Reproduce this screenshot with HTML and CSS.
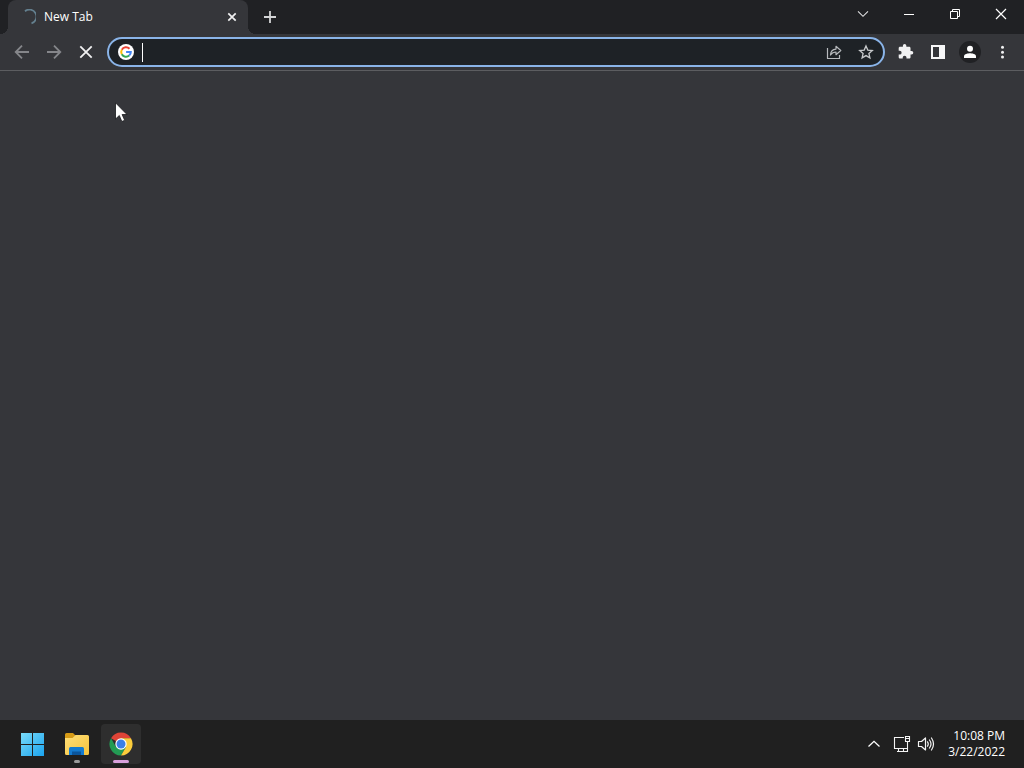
FILE: index.html
```html
<!DOCTYPE html>
<html lang="en">
<head>
<meta charset="utf-8">
<title>New Tab</title>
<link rel="stylesheet" href="styles.css">
</head>
<body>
<div class="desktop">
  <header class="tab-strip">
    <div class="tab">
      <svg class="spinner" width="16" height="16" viewBox="0 0 16 16"><path d="M5 2.200A7 7 0 1 1 11.500 14.300" fill="none" stroke="#64808f" stroke-width="1.800"/></svg>
      <span class="tab-title">New Tab</span>
      <button class="tab-close" aria-label="Close tab"><svg width="16" height="16" viewBox="0 0 16 16"><path d="M4.300 4.300l7.400 7.400M11.700 4.300l-7.400 7.400" stroke="#f1f1f2" stroke-width="1.700"/></svg></button>
    </div>
    <button class="new-tab" aria-label="New tab"><svg width="14" height="14" viewBox="0 0 14 14"><path d="M7 1v12M1 7h12" stroke="#d4d5d6" stroke-width="1.800"/></svg></button>
    <div class="window-controls">
      <button class="window-button" aria-label="Search tabs"><svg width="12" height="12" viewBox="0 0 12 12"><path d="M1 3.300l5 5 5-5" fill="none" stroke="#e0e0e1" stroke-width="1.100"/></svg></button>
      <button class="window-button" aria-label="Minimize"><svg width="12" height="12" viewBox="0 0 12 12"><path d="M1 6.500h10" stroke="#fff"/></svg></button>
      <button class="window-button" aria-label="Restore"><svg width="12" height="12" viewBox="0 0 12 12"><path d="M1.500 3.500h7v7h-7zM3.500 3.500v-2h7v7h-2" fill="none" stroke="#fff"/></svg></button>
      <button class="window-button" aria-label="Close"><svg width="12" height="12" viewBox="0 0 12 12"><path d="M1 1l10 10M11 1L1 11" stroke="#fff" stroke-width="1.200"/></svg></button>
    </div>
  </header>

  <nav class="toolbar">
    <button class="tool" aria-label="Back"><svg width="16" height="16" viewBox="0 0 16 16"><path d="M15 8H2M8 1.700L1.700 8 8 14.300" fill="none" stroke="#85868a" stroke-width="1.800"/></svg></button>
    <button class="tool" aria-label="Forward"><svg width="16" height="16" viewBox="0 0 16 16"><path d="M1 8h13M8 1.700L14.300 8 8 14.300" fill="none" stroke="#85868a" stroke-width="1.800"/></svg></button>
    <button class="tool" aria-label="Stop loading"><svg width="16" height="16" viewBox="0 0 16 16"><path d="M2.300 2.300l11.400 11.400M13.700 2.300L2.300 13.700" stroke="#f1f1f2" stroke-width="1.800"/></svg></button>
    <div class="address-bar">
      <svg class="search-logo" width="16" height="16" viewBox="0 0 16 16">
        <circle cx="8" cy="8" r="8" fill="#fff"/>
        <g fill="none" stroke-width="2">
          <path d="M11.500 4.700A4.800 4.800 0 0 0 3.800 5.700" stroke="#ea4335"/>
          <path d="M3.800 5.700a4.800 4.800 0 0 0 0 4.600" stroke="#fbbc05"/>
          <path d="M3.800 10.300a4.800 4.800 0 0 0 7.400 1.300" stroke="#34a853"/>
          <path d="M11.200 11.600A4.800 4.800 0 0 0 12.800 8H8.100" stroke="#4285f4"/>
        </g>
      </svg>
      <span class="caret"></span>
      <input class="address" type="text" aria-label="Address and search bar">
      <button class="tool" aria-label="Share this page"><svg width="16" height="16" viewBox="0 0 16 16"><path d="M1.500 4v10.500h12V11M4.500 11c.2-3.700 2.200-5.700 5.500-5.900V2.300L14.800 6.500 10 10.700V8C7.400 8 5.800 9 4.500 11z" fill="none" stroke="#b7babd" stroke-width="1.200" stroke-linejoin="round"/></svg></button>
      <button class="tool" aria-label="Bookmark this tab"><svg width="16" height="16" viewBox="0 0 16 16"><path d="M8 1.900l1.800 4.200 4.500.4-3.400 3 1 4.400L8 11.600l-3.900 2.300 1-4.400-3.400-3 4.500-.4z" fill="none" stroke="#c8cacc" stroke-width="1.300"/></svg></button>
    </div>
    <button class="tool" aria-label="Extensions"><svg width="16" height="16" viewBox="1 1 23 23"><path d="M20.500 11H19V7c0-1.100-.9-2-2-2h-4V3.500a2.500 2.500 0 0 0-5 0V5H4c-1.100 0-2 .9-2 2v3.800h1.500a2.700 2.700 0 0 1 0 5.400H2V20c0 1.100.9 2 2 2h3.800v-1.500a2.700 2.700 0 0 1 5.400 0V22H17c1.100 0 2-.9 2-2v-4h1.500a2.500 2.500 0 0 0 0-5z" fill="#f1f1f2"/></svg></button>
    <button class="tool" aria-label="Side panel"><svg width="16" height="16" viewBox="0 0 16 16"><path d="M1 1h14v14H1zM3 3v10h6V3z" fill="#f7f7f8" fill-rule="evenodd"/></svg></button>
    <button class="tool" aria-label="Profile"><svg width="22" height="22" viewBox="0 0 22 22"><circle cx="11" cy="11" r="11" fill="#202124"/><circle cx="11" cy="7.800" r="3" fill="#fff"/><path d="M5 17v-1.800C5 13 9 12.200 11 12.200s6 .8 6 3V17z" fill="#fff"/></svg></button>
    <button class="tool" aria-label="Menu"><svg width="16" height="16" viewBox="0 0 16 16"><g fill="#f1f1f2"><circle cx="8.500" cy="3.300" r="1.500"/><circle cx="8.500" cy="8.200" r="1.500"/><circle cx="8.500" cy="13.100" r="1.500"/></g></svg></button>
  </nav>

  <main class="page"></main>

  <footer class="taskbar">
    <div class="apps">
      <button class="app" aria-label="Start"><svg width="24" height="24" viewBox="0 0 24 24"><defs><linearGradient id="win" x1="0" y1="0" x2="24" y2="24" gradientUnits="userSpaceOnUse"><stop offset="0" stop-color="#7bdcf9"/><stop offset="1" stop-color="#18a2ee"/></linearGradient></defs><path d="M0 1h11v11H0zM12 1h11v11H12zM0 13h11v11H0zM12 13h11v11H12z" fill="url(#win)"/></svg></button>
      <button class="app app-open" aria-label="File Explorer"><svg width="26" height="24" viewBox="0 0 26 24"><defs><linearGradient id="folder" x1="0" y1="0" x2="1" y2="1"><stop offset="0" stop-color="#ffdf78"/><stop offset="1" stop-color="#f6c33c"/></linearGradient></defs><path d="M1 8V2.500Q1 1 2.500 1H9l2.500 2.500L9 7z" fill="#d79b16"/><path d="M1 6h7.500l3-3H23.500Q25 3 25 4.500V21.500Q25 23 23.500 23H2.500Q1 23 1 21.500z" fill="url(#folder)"/><path d="M5 23v-6.500Q5 15 6.500 15h12Q20 15 20 16.500V23z" fill="#147bcf"/><path d="M8 23v-3.500h9V23z" fill="#0b559b"/></svg></button>
      <button class="app app-active" aria-label="Google Chrome"><svg width="24" height="24" viewBox="0 0 24 24"><path d="M12 12L2.040 6.250A11.500 11.500 0 0 1 21.960 6.250H12z" fill="#df4437"/><path d="M2.040 6.250A11.500 11.500 0 0 0 12 23.500L17 14.900 12 12 7 14.900z" fill="#239b54"/><path d="M12 23.500A11.500 11.500 0 0 0 21.960 6.250H12V12l5 2.900z" fill="#fccd3b"/><circle cx="12" cy="12" r="5.700" fill="#fff"/><circle cx="12" cy="12" r="4.500" fill="#3c7fe5"/></svg></button>
    </div>
    <div class="tray">
      <button class="tray-button" aria-label="Show hidden icons"><svg width="14" height="14" viewBox="0 0 14 14"><path d="M1.500 9.500L7 4.300l5.500 5.200" fill="none" stroke="#fff" stroke-width="1.300"/></svg></button>
      <button class="tray-button tray-status" aria-label="Network and volume">
        <svg width="18" height="18" viewBox="0 0 18 18"><path d="M11 2.500H1.500v11h13M5.500 13.500v3M10.500 13.500v3M4 16.500h10.500V6.500M12.500 1.500h4v5h-4zM12.500 3.500h4" fill="none" stroke="#f4f4f4" stroke-width="1.100"/></svg>
        <svg width="18" height="18" viewBox="0 0 18 18"><path d="M1.500 6.500h3L8.500 3v12l-4-3.500h-3zM10.500 6.800q1.500 2.200 0 4.400M12.500 5q3 4 0 8M14.500 3q4 6 0 12" fill="none" stroke="#f4f4f4" stroke-width="1.200" stroke-linejoin="round" stroke-linecap="round"/></svg>
      </button>
      <div class="clock"><time>10:08 PM</time><time>3/22/2022</time></div>
    </div>
  </footer>

  <svg class="pointer" width="14" height="20" viewBox="0 0 14 20"><path d="M.5 .8V17l3.800-3.500 2.500 6 2.900-1.200-2.600-5.800h4.900z" fill="#fff" stroke="#17181a" stroke-width=".8"/></svg>
</div>
</body>
</html>
```

FILE: styles.css
```css
* {
  box-sizing: border-box;
}

body {
  margin: 0;
  font-family: "Open Sans", "Noto Sans", sans-serif;
  color: #fff;
}

button {
  display: flex;
  align-items: center;
  justify-content: center;
  padding: 0;
  border: 0;
  background: none;
  color: inherit;
}

svg {
  display: block;
  flex: none;
}

.desktop {
  position: relative;
  display: flex;
  flex-direction: column;
  min-height: 100vh;
  background: #35363a;
}

.tab-strip {
  display: flex;
  height: 34px;
  padding-left: 8px;
  background: #202124;
}

.tab {
  position: relative;
  display: flex;
  align-items: center;
  gap: 8px;
  width: 240px;
  padding: 0 8px 0 12px;
  border-radius: 8px 8px 0 0;
  background: #35363a;
}

.tab::before,
.tab::after {
  content: "";
  position: absolute;
  bottom: 0;
  width: 8px;
  height: 8px;
}

.tab::before {
  right: 100%;
  background: radial-gradient(circle at 0 0, #202124 8px, #35363a 8px);
}

.tab::after {
  left: 100%;
  background: radial-gradient(circle at 100% 0, #202124 8px, #35363a 8px);
}

.tab-title {
  flex: 1;
  font-size: 12px;
  line-height: 16px;
}

.new-tab {
  width: 28px;
  margin-left: 8px;
}

.window-controls {
  display: flex;
  height: 28px;
  margin-left: auto;
}

.window-button {
  width: 46px;
}

.toolbar {
  display: flex;
  align-items: center;
  height: 37px;
  padding: 0 6px;
  border-bottom: 1px solid #5c5d60;
}

.tool {
  flex: none;
  width: 32px;
  height: 28px;
}

.address-bar {
  display: flex;
  flex: 1;
  align-items: center;
  height: 30px;
  margin: 0 5px;
  padding: 0 1px 0 9px;
  border: 2px solid #8ab4e8;
  border-radius: 15px;
  background: #1e2226;
}

.caret {
  width: 1px;
  height: 19px;
  margin-left: 8px;
  background: #fff;
}

.address {
  flex: 1;
  min-width: 0;
  height: 24px;
  padding: 0;
  border: 0;
  outline: 0;
  background: none;
  color: inherit;
  font: inherit;
  font-size: 14px;
}

.page {
  flex: 1;
}

.taskbar {
  display: flex;
  justify-content: space-between;
  height: 48px;
  padding: 0 19px 0 13px;
  background: #202020;
}

.apps {
  display: flex;
  align-items: center;
  gap: 4px;
}

.app {
  position: relative;
  width: 40px;
  height: 40px;
  border-radius: 4px;
}

.app-active {
  background: #2e2e2e;
}

.app-open::after,
.app-active::after {
  content: "";
  position: absolute;
  bottom: 1px;
  left: 50%;
  width: 6px;
  height: 3px;
  border-radius: 2px;
  background: #9a9a9a;
  transform: translateX(-50%);
}

.app-active::after {
  width: 16px;
  background: #d9a0dc;
}

.tray {
  display: flex;
  align-items: center;
}

.tray-button {
  width: 24px;
  height: 40px;
}

.tray-status {
  gap: 6px;
  width: 56px;
}

.clock {
  display: flex;
  flex-direction: column;
  align-items: flex-end;
  min-width: 63px;
  font-size: 12px;
  line-height: 16px;
}

.pointer {
  position: absolute;
  top: 102px;
  left: 115px;
}
```
